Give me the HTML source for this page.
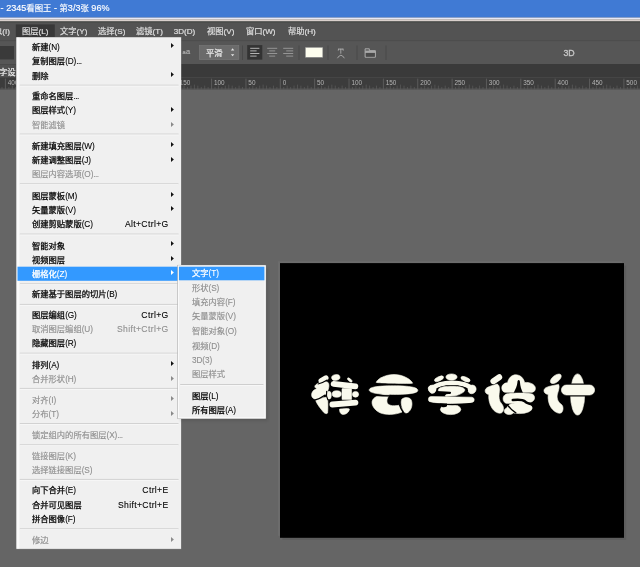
<!DOCTYPE html>
<html lang="zh-CN">
<head>
<meta charset="utf-8">
<title>2345看图王 - 第3/3张</title>
<style>
html,body{margin:0;padding:0}
body{width:640px;height:567px;overflow:hidden;position:relative;background:#656565;font-family:"Liberation Sans","Noto Sans CJK SC",sans-serif;-webkit-font-smoothing:antialiased}
#defs{position:absolute;width:0;height:0;overflow:hidden}
#bg{position:absolute;left:0;top:0;display:block}
.t{position:absolute;white-space:nowrap;line-height:12px;height:12px}
#chrome,.items{position:absolute;left:0;top:0;width:100%;height:100%;filter:blur(.28px)}
.t span{font-size:1.012em;letter-spacing:.12px;-webkit-text-stroke:.1px currentColor}
.ttl span{font-size:1.05em;letter-spacing:.02px}
.rl span{font-size:1em;letter-spacing:0}
.aa span{font-size:1em;letter-spacing:.3px}
.sm{font-style:normal;font-size:.78em}
.b3d span{font-size:1em;letter-spacing:0;-webkit-text-stroke:.3px currentColor !important}
.mi .t span{font-size:.97em;letter-spacing:-.1px}
.mi .sc span{font-size:1.012em;letter-spacing:.36px}
.menu{position:absolute}
.panel{position:absolute;left:0;top:0;display:block}
.mi{position:absolute}
.arr{position:absolute;display:block}
.el{font-style:normal;letter-spacing:-.5px}
.mb span{font-size:.95em;letter-spacing:0}
#chrome span{-webkit-text-stroke:.16px currentColor}
#chrome .rl span{-webkit-text-stroke:0}
.t span.c,.mi .t span.c{font-family:"Liberation Sans","Noto Sans CJK SC",sans-serif;font-size:.976em;letter-spacing:0;-webkit-text-stroke:.25px currentColor}
.dis .t span.c{-webkit-text-stroke:.15px currentColor}
</style>
</head>
<body>
<svg id="defs" aria-hidden="true"><defs><filter id="shb" x="-10%" y="-10%" width="120%" height="120%"><feGaussianBlur stdDeviation="1.6"/></filter></defs></svg>
<svg id="bg" width="640" height="567" viewBox="0 0 640 567"><rect x="0.00" y="0.00" width="640.00" height="17.60" fill="#407ad4"/><rect x="0.00" y="17.60" width="640.00" height="1.70" fill="#e6e8f6"/><rect x="0.00" y="19.30" width="640.00" height="2.20" fill="#d9d0cc"/><rect x="0.00" y="21.50" width="640.00" height="20.00" fill="#535353"/><rect x="0.00" y="21.50" width="640.00" height="1.30" fill="#4a4c4a"/><rect x="0.00" y="40.50" width="640.00" height="0.90" fill="#484848"/><rect x="0.00" y="41.40" width="640.00" height="22.60" fill="#565656"/><rect x="0.00" y="64.00" width="640.00" height="13.50" fill="#3a3a3a"/><rect x="0.00" y="64.30" width="16.50" height="13.40" fill="#505050"/><rect x="0.00" y="77.50" width="640.00" height="12.10" fill="#3c3c3c"/><rect x="15.80" y="24.40" width="39.00" height="13.20" fill="#383838"/><rect x="0.00" y="46.00" width="14.00" height="13.40" fill="#3a3a3a"/><rect x="199.40" y="45.50" width="39.40" height="14.10" fill="#6b6b6b" stroke="#7a7a7a" stroke-width="0.6"/><rect x="242.00" y="45.50" width="0.80" height="14.50" fill="#474747"/><rect x="298.60" y="45.50" width="0.80" height="14.50" fill="#474747"/><rect x="327.60" y="45.50" width="0.80" height="14.50" fill="#474747"/><rect x="356.60" y="45.50" width="0.80" height="14.50" fill="#474747"/><rect x="385.60" y="45.50" width="0.80" height="14.50" fill="#474747"/><rect x="247.20" y="45.10" width="15.10" height="14.50" fill="#333333"/><line x1="250.20" y1="48.30" x2="259.40" y2="48.30" stroke="#c2c2c2" stroke-width="0.90"/><line x1="267.20" y1="48.30" x2="277.20" y2="48.30" stroke="#9c9c9c" stroke-width="0.90"/><line x1="283.20" y1="48.30" x2="293.20" y2="48.30" stroke="#9c9c9c" stroke-width="0.90"/><line x1="250.20" y1="50.90" x2="256.60" y2="50.90" stroke="#c2c2c2" stroke-width="0.90"/><line x1="269.20" y1="50.90" x2="275.20" y2="50.90" stroke="#9c9c9c" stroke-width="0.90"/><line x1="286.20" y1="50.90" x2="293.20" y2="50.90" stroke="#9c9c9c" stroke-width="0.90"/><line x1="250.20" y1="53.50" x2="259.40" y2="53.50" stroke="#c2c2c2" stroke-width="0.90"/><line x1="267.20" y1="53.50" x2="277.20" y2="53.50" stroke="#9c9c9c" stroke-width="0.90"/><line x1="283.20" y1="53.50" x2="293.20" y2="53.50" stroke="#9c9c9c" stroke-width="0.90"/><line x1="250.20" y1="56.10" x2="256.60" y2="56.10" stroke="#c2c2c2" stroke-width="0.90"/><line x1="269.20" y1="56.10" x2="275.20" y2="56.10" stroke="#9c9c9c" stroke-width="0.90"/><line x1="286.20" y1="56.10" x2="293.20" y2="56.10" stroke="#9c9c9c" stroke-width="0.90"/><rect x="305.40" y="47.40" width="17.40" height="9.90" fill="#fdfdee" stroke="#8a8a8a" stroke-width="0.5"/><g fill="none" stroke="#bcbcbc" stroke-width="0.75" stroke-linecap="round"><path d="M338.6 49.1h4.4M340.8 49.1v4.2"/><path d="M338.3 50.3l0.2 -1.2M343.2 50.3l-0.2 -1.2" stroke-width="0.7"/><path d="M337.6 57.9q3.3 -5.6 6.6 0"/></g><g fill="none" stroke="#b4b4b4" stroke-width="0.9"><path d="M365.1 57.2v-8.4h4.2v1.9h6.1v6.5z"/><path d="M365.1 52.4h10.3" stroke-width="0.8"/></g><rect x="365.1" y="50.6" width="10.3" height="1.8" fill="#a8a8a8"/><rect x="366" y="53" width="8.6" height="3.6" fill="#4a4a4a"/><path d="M230.9 50.4l1.7 -2.1l1.7 2.1zM230.9 54.2l1.7 2.1l1.7 -2.1z" fill="#e4e4e4"/><line x1="-28.94" y1="78.60" x2="-28.94" y2="89.60" stroke="#666666" stroke-width="0.75"/><line x1="-25.50" y1="87.00" x2="-25.50" y2="89.60" stroke="#5d5d5d" stroke-width="0.70"/><line x1="-22.07" y1="85.60" x2="-22.07" y2="89.60" stroke="#5d5d5d" stroke-width="0.70"/><line x1="-18.63" y1="87.00" x2="-18.63" y2="89.60" stroke="#5d5d5d" stroke-width="0.70"/><line x1="-15.20" y1="85.60" x2="-15.20" y2="89.60" stroke="#5d5d5d" stroke-width="0.70"/><line x1="-11.76" y1="84.60" x2="-11.76" y2="89.60" stroke="#5d5d5d" stroke-width="0.70"/><line x1="-8.32" y1="85.60" x2="-8.32" y2="89.60" stroke="#5d5d5d" stroke-width="0.70"/><line x1="-4.89" y1="87.00" x2="-4.89" y2="89.60" stroke="#5d5d5d" stroke-width="0.70"/><line x1="-1.45" y1="85.60" x2="-1.45" y2="89.60" stroke="#5d5d5d" stroke-width="0.70"/><line x1="1.98" y1="87.00" x2="1.98" y2="89.60" stroke="#5d5d5d" stroke-width="0.70"/><line x1="5.42" y1="78.60" x2="5.42" y2="89.60" stroke="#666666" stroke-width="0.75"/><line x1="8.86" y1="87.00" x2="8.86" y2="89.60" stroke="#5d5d5d" stroke-width="0.70"/><line x1="12.29" y1="85.60" x2="12.29" y2="89.60" stroke="#5d5d5d" stroke-width="0.70"/><line x1="15.73" y1="87.00" x2="15.73" y2="89.60" stroke="#5d5d5d" stroke-width="0.70"/><line x1="19.16" y1="85.60" x2="19.16" y2="89.60" stroke="#5d5d5d" stroke-width="0.70"/><line x1="22.60" y1="84.60" x2="22.60" y2="89.60" stroke="#5d5d5d" stroke-width="0.70"/><line x1="26.04" y1="85.60" x2="26.04" y2="89.60" stroke="#5d5d5d" stroke-width="0.70"/><line x1="29.47" y1="87.00" x2="29.47" y2="89.60" stroke="#5d5d5d" stroke-width="0.70"/><line x1="32.91" y1="85.60" x2="32.91" y2="89.60" stroke="#5d5d5d" stroke-width="0.70"/><line x1="36.34" y1="87.00" x2="36.34" y2="89.60" stroke="#5d5d5d" stroke-width="0.70"/><line x1="39.78" y1="78.60" x2="39.78" y2="89.60" stroke="#666666" stroke-width="0.75"/><line x1="43.22" y1="87.00" x2="43.22" y2="89.60" stroke="#5d5d5d" stroke-width="0.70"/><line x1="46.65" y1="85.60" x2="46.65" y2="89.60" stroke="#5d5d5d" stroke-width="0.70"/><line x1="50.09" y1="87.00" x2="50.09" y2="89.60" stroke="#5d5d5d" stroke-width="0.70"/><line x1="53.52" y1="85.60" x2="53.52" y2="89.60" stroke="#5d5d5d" stroke-width="0.70"/><line x1="56.96" y1="84.60" x2="56.96" y2="89.60" stroke="#5d5d5d" stroke-width="0.70"/><line x1="60.40" y1="85.60" x2="60.40" y2="89.60" stroke="#5d5d5d" stroke-width="0.70"/><line x1="63.83" y1="87.00" x2="63.83" y2="89.60" stroke="#5d5d5d" stroke-width="0.70"/><line x1="67.27" y1="85.60" x2="67.27" y2="89.60" stroke="#5d5d5d" stroke-width="0.70"/><line x1="70.70" y1="87.00" x2="70.70" y2="89.60" stroke="#5d5d5d" stroke-width="0.70"/><line x1="74.14" y1="78.60" x2="74.14" y2="89.60" stroke="#666666" stroke-width="0.75"/><line x1="77.58" y1="87.00" x2="77.58" y2="89.60" stroke="#5d5d5d" stroke-width="0.70"/><line x1="81.01" y1="85.60" x2="81.01" y2="89.60" stroke="#5d5d5d" stroke-width="0.70"/><line x1="84.45" y1="87.00" x2="84.45" y2="89.60" stroke="#5d5d5d" stroke-width="0.70"/><line x1="87.88" y1="85.60" x2="87.88" y2="89.60" stroke="#5d5d5d" stroke-width="0.70"/><line x1="91.32" y1="84.60" x2="91.32" y2="89.60" stroke="#5d5d5d" stroke-width="0.70"/><line x1="94.76" y1="85.60" x2="94.76" y2="89.60" stroke="#5d5d5d" stroke-width="0.70"/><line x1="98.19" y1="87.00" x2="98.19" y2="89.60" stroke="#5d5d5d" stroke-width="0.70"/><line x1="101.63" y1="85.60" x2="101.63" y2="89.60" stroke="#5d5d5d" stroke-width="0.70"/><line x1="105.06" y1="87.00" x2="105.06" y2="89.60" stroke="#5d5d5d" stroke-width="0.70"/><line x1="108.50" y1="78.60" x2="108.50" y2="89.60" stroke="#666666" stroke-width="0.75"/><line x1="111.94" y1="87.00" x2="111.94" y2="89.60" stroke="#5d5d5d" stroke-width="0.70"/><line x1="115.37" y1="85.60" x2="115.37" y2="89.60" stroke="#5d5d5d" stroke-width="0.70"/><line x1="118.81" y1="87.00" x2="118.81" y2="89.60" stroke="#5d5d5d" stroke-width="0.70"/><line x1="122.24" y1="85.60" x2="122.24" y2="89.60" stroke="#5d5d5d" stroke-width="0.70"/><line x1="125.68" y1="84.60" x2="125.68" y2="89.60" stroke="#5d5d5d" stroke-width="0.70"/><line x1="129.12" y1="85.60" x2="129.12" y2="89.60" stroke="#5d5d5d" stroke-width="0.70"/><line x1="132.55" y1="87.00" x2="132.55" y2="89.60" stroke="#5d5d5d" stroke-width="0.70"/><line x1="135.99" y1="85.60" x2="135.99" y2="89.60" stroke="#5d5d5d" stroke-width="0.70"/><line x1="139.42" y1="87.00" x2="139.42" y2="89.60" stroke="#5d5d5d" stroke-width="0.70"/><line x1="142.86" y1="78.60" x2="142.86" y2="89.60" stroke="#666666" stroke-width="0.75"/><line x1="146.30" y1="87.00" x2="146.30" y2="89.60" stroke="#5d5d5d" stroke-width="0.70"/><line x1="149.73" y1="85.60" x2="149.73" y2="89.60" stroke="#5d5d5d" stroke-width="0.70"/><line x1="153.17" y1="87.00" x2="153.17" y2="89.60" stroke="#5d5d5d" stroke-width="0.70"/><line x1="156.60" y1="85.60" x2="156.60" y2="89.60" stroke="#5d5d5d" stroke-width="0.70"/><line x1="160.04" y1="84.60" x2="160.04" y2="89.60" stroke="#5d5d5d" stroke-width="0.70"/><line x1="163.48" y1="85.60" x2="163.48" y2="89.60" stroke="#5d5d5d" stroke-width="0.70"/><line x1="166.91" y1="87.00" x2="166.91" y2="89.60" stroke="#5d5d5d" stroke-width="0.70"/><line x1="170.35" y1="85.60" x2="170.35" y2="89.60" stroke="#5d5d5d" stroke-width="0.70"/><line x1="173.78" y1="87.00" x2="173.78" y2="89.60" stroke="#5d5d5d" stroke-width="0.70"/><line x1="177.22" y1="78.60" x2="177.22" y2="89.60" stroke="#666666" stroke-width="0.75"/><line x1="180.66" y1="87.00" x2="180.66" y2="89.60" stroke="#5d5d5d" stroke-width="0.70"/><line x1="184.09" y1="85.60" x2="184.09" y2="89.60" stroke="#5d5d5d" stroke-width="0.70"/><line x1="187.53" y1="87.00" x2="187.53" y2="89.60" stroke="#5d5d5d" stroke-width="0.70"/><line x1="190.96" y1="85.60" x2="190.96" y2="89.60" stroke="#5d5d5d" stroke-width="0.70"/><line x1="194.40" y1="84.60" x2="194.40" y2="89.60" stroke="#5d5d5d" stroke-width="0.70"/><line x1="197.84" y1="85.60" x2="197.84" y2="89.60" stroke="#5d5d5d" stroke-width="0.70"/><line x1="201.27" y1="87.00" x2="201.27" y2="89.60" stroke="#5d5d5d" stroke-width="0.70"/><line x1="204.71" y1="85.60" x2="204.71" y2="89.60" stroke="#5d5d5d" stroke-width="0.70"/><line x1="208.14" y1="87.00" x2="208.14" y2="89.60" stroke="#5d5d5d" stroke-width="0.70"/><line x1="211.58" y1="78.60" x2="211.58" y2="89.60" stroke="#666666" stroke-width="0.75"/><line x1="215.02" y1="87.00" x2="215.02" y2="89.60" stroke="#5d5d5d" stroke-width="0.70"/><line x1="218.45" y1="85.60" x2="218.45" y2="89.60" stroke="#5d5d5d" stroke-width="0.70"/><line x1="221.89" y1="87.00" x2="221.89" y2="89.60" stroke="#5d5d5d" stroke-width="0.70"/><line x1="225.32" y1="85.60" x2="225.32" y2="89.60" stroke="#5d5d5d" stroke-width="0.70"/><line x1="228.76" y1="84.60" x2="228.76" y2="89.60" stroke="#5d5d5d" stroke-width="0.70"/><line x1="232.20" y1="85.60" x2="232.20" y2="89.60" stroke="#5d5d5d" stroke-width="0.70"/><line x1="235.63" y1="87.00" x2="235.63" y2="89.60" stroke="#5d5d5d" stroke-width="0.70"/><line x1="239.07" y1="85.60" x2="239.07" y2="89.60" stroke="#5d5d5d" stroke-width="0.70"/><line x1="242.50" y1="87.00" x2="242.50" y2="89.60" stroke="#5d5d5d" stroke-width="0.70"/><line x1="245.94" y1="78.60" x2="245.94" y2="89.60" stroke="#666666" stroke-width="0.75"/><line x1="249.38" y1="87.00" x2="249.38" y2="89.60" stroke="#5d5d5d" stroke-width="0.70"/><line x1="252.81" y1="85.60" x2="252.81" y2="89.60" stroke="#5d5d5d" stroke-width="0.70"/><line x1="256.25" y1="87.00" x2="256.25" y2="89.60" stroke="#5d5d5d" stroke-width="0.70"/><line x1="259.68" y1="85.60" x2="259.68" y2="89.60" stroke="#5d5d5d" stroke-width="0.70"/><line x1="263.12" y1="84.60" x2="263.12" y2="89.60" stroke="#5d5d5d" stroke-width="0.70"/><line x1="266.56" y1="85.60" x2="266.56" y2="89.60" stroke="#5d5d5d" stroke-width="0.70"/><line x1="269.99" y1="87.00" x2="269.99" y2="89.60" stroke="#5d5d5d" stroke-width="0.70"/><line x1="273.43" y1="85.60" x2="273.43" y2="89.60" stroke="#5d5d5d" stroke-width="0.70"/><line x1="276.86" y1="87.00" x2="276.86" y2="89.60" stroke="#5d5d5d" stroke-width="0.70"/><line x1="280.30" y1="78.60" x2="280.30" y2="89.60" stroke="#666666" stroke-width="0.75"/><line x1="283.74" y1="87.00" x2="283.74" y2="89.60" stroke="#5d5d5d" stroke-width="0.70"/><line x1="287.17" y1="85.60" x2="287.17" y2="89.60" stroke="#5d5d5d" stroke-width="0.70"/><line x1="290.61" y1="87.00" x2="290.61" y2="89.60" stroke="#5d5d5d" stroke-width="0.70"/><line x1="294.04" y1="85.60" x2="294.04" y2="89.60" stroke="#5d5d5d" stroke-width="0.70"/><line x1="297.48" y1="84.60" x2="297.48" y2="89.60" stroke="#5d5d5d" stroke-width="0.70"/><line x1="300.92" y1="85.60" x2="300.92" y2="89.60" stroke="#5d5d5d" stroke-width="0.70"/><line x1="304.35" y1="87.00" x2="304.35" y2="89.60" stroke="#5d5d5d" stroke-width="0.70"/><line x1="307.79" y1="85.60" x2="307.79" y2="89.60" stroke="#5d5d5d" stroke-width="0.70"/><line x1="311.22" y1="87.00" x2="311.22" y2="89.60" stroke="#5d5d5d" stroke-width="0.70"/><line x1="314.66" y1="78.60" x2="314.66" y2="89.60" stroke="#666666" stroke-width="0.75"/><line x1="318.10" y1="87.00" x2="318.10" y2="89.60" stroke="#5d5d5d" stroke-width="0.70"/><line x1="321.53" y1="85.60" x2="321.53" y2="89.60" stroke="#5d5d5d" stroke-width="0.70"/><line x1="324.97" y1="87.00" x2="324.97" y2="89.60" stroke="#5d5d5d" stroke-width="0.70"/><line x1="328.40" y1="85.60" x2="328.40" y2="89.60" stroke="#5d5d5d" stroke-width="0.70"/><line x1="331.84" y1="84.60" x2="331.84" y2="89.60" stroke="#5d5d5d" stroke-width="0.70"/><line x1="335.28" y1="85.60" x2="335.28" y2="89.60" stroke="#5d5d5d" stroke-width="0.70"/><line x1="338.71" y1="87.00" x2="338.71" y2="89.60" stroke="#5d5d5d" stroke-width="0.70"/><line x1="342.15" y1="85.60" x2="342.15" y2="89.60" stroke="#5d5d5d" stroke-width="0.70"/><line x1="345.58" y1="87.00" x2="345.58" y2="89.60" stroke="#5d5d5d" stroke-width="0.70"/><line x1="349.02" y1="78.60" x2="349.02" y2="89.60" stroke="#666666" stroke-width="0.75"/><line x1="352.46" y1="87.00" x2="352.46" y2="89.60" stroke="#5d5d5d" stroke-width="0.70"/><line x1="355.89" y1="85.60" x2="355.89" y2="89.60" stroke="#5d5d5d" stroke-width="0.70"/><line x1="359.33" y1="87.00" x2="359.33" y2="89.60" stroke="#5d5d5d" stroke-width="0.70"/><line x1="362.76" y1="85.60" x2="362.76" y2="89.60" stroke="#5d5d5d" stroke-width="0.70"/><line x1="366.20" y1="84.60" x2="366.20" y2="89.60" stroke="#5d5d5d" stroke-width="0.70"/><line x1="369.64" y1="85.60" x2="369.64" y2="89.60" stroke="#5d5d5d" stroke-width="0.70"/><line x1="373.07" y1="87.00" x2="373.07" y2="89.60" stroke="#5d5d5d" stroke-width="0.70"/><line x1="376.51" y1="85.60" x2="376.51" y2="89.60" stroke="#5d5d5d" stroke-width="0.70"/><line x1="379.94" y1="87.00" x2="379.94" y2="89.60" stroke="#5d5d5d" stroke-width="0.70"/><line x1="383.38" y1="78.60" x2="383.38" y2="89.60" stroke="#666666" stroke-width="0.75"/><line x1="386.82" y1="87.00" x2="386.82" y2="89.60" stroke="#5d5d5d" stroke-width="0.70"/><line x1="390.25" y1="85.60" x2="390.25" y2="89.60" stroke="#5d5d5d" stroke-width="0.70"/><line x1="393.69" y1="87.00" x2="393.69" y2="89.60" stroke="#5d5d5d" stroke-width="0.70"/><line x1="397.12" y1="85.60" x2="397.12" y2="89.60" stroke="#5d5d5d" stroke-width="0.70"/><line x1="400.56" y1="84.60" x2="400.56" y2="89.60" stroke="#5d5d5d" stroke-width="0.70"/><line x1="404.00" y1="85.60" x2="404.00" y2="89.60" stroke="#5d5d5d" stroke-width="0.70"/><line x1="407.43" y1="87.00" x2="407.43" y2="89.60" stroke="#5d5d5d" stroke-width="0.70"/><line x1="410.87" y1="85.60" x2="410.87" y2="89.60" stroke="#5d5d5d" stroke-width="0.70"/><line x1="414.30" y1="87.00" x2="414.30" y2="89.60" stroke="#5d5d5d" stroke-width="0.70"/><line x1="417.74" y1="78.60" x2="417.74" y2="89.60" stroke="#666666" stroke-width="0.75"/><line x1="421.18" y1="87.00" x2="421.18" y2="89.60" stroke="#5d5d5d" stroke-width="0.70"/><line x1="424.61" y1="85.60" x2="424.61" y2="89.60" stroke="#5d5d5d" stroke-width="0.70"/><line x1="428.05" y1="87.00" x2="428.05" y2="89.60" stroke="#5d5d5d" stroke-width="0.70"/><line x1="431.48" y1="85.60" x2="431.48" y2="89.60" stroke="#5d5d5d" stroke-width="0.70"/><line x1="434.92" y1="84.60" x2="434.92" y2="89.60" stroke="#5d5d5d" stroke-width="0.70"/><line x1="438.36" y1="85.60" x2="438.36" y2="89.60" stroke="#5d5d5d" stroke-width="0.70"/><line x1="441.79" y1="87.00" x2="441.79" y2="89.60" stroke="#5d5d5d" stroke-width="0.70"/><line x1="445.23" y1="85.60" x2="445.23" y2="89.60" stroke="#5d5d5d" stroke-width="0.70"/><line x1="448.66" y1="87.00" x2="448.66" y2="89.60" stroke="#5d5d5d" stroke-width="0.70"/><line x1="452.10" y1="78.60" x2="452.10" y2="89.60" stroke="#666666" stroke-width="0.75"/><line x1="455.54" y1="87.00" x2="455.54" y2="89.60" stroke="#5d5d5d" stroke-width="0.70"/><line x1="458.97" y1="85.60" x2="458.97" y2="89.60" stroke="#5d5d5d" stroke-width="0.70"/><line x1="462.41" y1="87.00" x2="462.41" y2="89.60" stroke="#5d5d5d" stroke-width="0.70"/><line x1="465.84" y1="85.60" x2="465.84" y2="89.60" stroke="#5d5d5d" stroke-width="0.70"/><line x1="469.28" y1="84.60" x2="469.28" y2="89.60" stroke="#5d5d5d" stroke-width="0.70"/><line x1="472.72" y1="85.60" x2="472.72" y2="89.60" stroke="#5d5d5d" stroke-width="0.70"/><line x1="476.15" y1="87.00" x2="476.15" y2="89.60" stroke="#5d5d5d" stroke-width="0.70"/><line x1="479.59" y1="85.60" x2="479.59" y2="89.60" stroke="#5d5d5d" stroke-width="0.70"/><line x1="483.02" y1="87.00" x2="483.02" y2="89.60" stroke="#5d5d5d" stroke-width="0.70"/><line x1="486.46" y1="78.60" x2="486.46" y2="89.60" stroke="#666666" stroke-width="0.75"/><line x1="489.90" y1="87.00" x2="489.90" y2="89.60" stroke="#5d5d5d" stroke-width="0.70"/><line x1="493.33" y1="85.60" x2="493.33" y2="89.60" stroke="#5d5d5d" stroke-width="0.70"/><line x1="496.77" y1="87.00" x2="496.77" y2="89.60" stroke="#5d5d5d" stroke-width="0.70"/><line x1="500.20" y1="85.60" x2="500.20" y2="89.60" stroke="#5d5d5d" stroke-width="0.70"/><line x1="503.64" y1="84.60" x2="503.64" y2="89.60" stroke="#5d5d5d" stroke-width="0.70"/><line x1="507.08" y1="85.60" x2="507.08" y2="89.60" stroke="#5d5d5d" stroke-width="0.70"/><line x1="510.51" y1="87.00" x2="510.51" y2="89.60" stroke="#5d5d5d" stroke-width="0.70"/><line x1="513.95" y1="85.60" x2="513.95" y2="89.60" stroke="#5d5d5d" stroke-width="0.70"/><line x1="517.38" y1="87.00" x2="517.38" y2="89.60" stroke="#5d5d5d" stroke-width="0.70"/><line x1="520.82" y1="78.60" x2="520.82" y2="89.60" stroke="#666666" stroke-width="0.75"/><line x1="524.26" y1="87.00" x2="524.26" y2="89.60" stroke="#5d5d5d" stroke-width="0.70"/><line x1="527.69" y1="85.60" x2="527.69" y2="89.60" stroke="#5d5d5d" stroke-width="0.70"/><line x1="531.13" y1="87.00" x2="531.13" y2="89.60" stroke="#5d5d5d" stroke-width="0.70"/><line x1="534.56" y1="85.60" x2="534.56" y2="89.60" stroke="#5d5d5d" stroke-width="0.70"/><line x1="538.00" y1="84.60" x2="538.00" y2="89.60" stroke="#5d5d5d" stroke-width="0.70"/><line x1="541.44" y1="85.60" x2="541.44" y2="89.60" stroke="#5d5d5d" stroke-width="0.70"/><line x1="544.87" y1="87.00" x2="544.87" y2="89.60" stroke="#5d5d5d" stroke-width="0.70"/><line x1="548.31" y1="85.60" x2="548.31" y2="89.60" stroke="#5d5d5d" stroke-width="0.70"/><line x1="551.74" y1="87.00" x2="551.74" y2="89.60" stroke="#5d5d5d" stroke-width="0.70"/><line x1="555.18" y1="78.60" x2="555.18" y2="89.60" stroke="#666666" stroke-width="0.75"/><line x1="558.62" y1="87.00" x2="558.62" y2="89.60" stroke="#5d5d5d" stroke-width="0.70"/><line x1="562.05" y1="85.60" x2="562.05" y2="89.60" stroke="#5d5d5d" stroke-width="0.70"/><line x1="565.49" y1="87.00" x2="565.49" y2="89.60" stroke="#5d5d5d" stroke-width="0.70"/><line x1="568.92" y1="85.60" x2="568.92" y2="89.60" stroke="#5d5d5d" stroke-width="0.70"/><line x1="572.36" y1="84.60" x2="572.36" y2="89.60" stroke="#5d5d5d" stroke-width="0.70"/><line x1="575.80" y1="85.60" x2="575.80" y2="89.60" stroke="#5d5d5d" stroke-width="0.70"/><line x1="579.23" y1="87.00" x2="579.23" y2="89.60" stroke="#5d5d5d" stroke-width="0.70"/><line x1="582.67" y1="85.60" x2="582.67" y2="89.60" stroke="#5d5d5d" stroke-width="0.70"/><line x1="586.10" y1="87.00" x2="586.10" y2="89.60" stroke="#5d5d5d" stroke-width="0.70"/><line x1="589.54" y1="78.60" x2="589.54" y2="89.60" stroke="#666666" stroke-width="0.75"/><line x1="592.98" y1="87.00" x2="592.98" y2="89.60" stroke="#5d5d5d" stroke-width="0.70"/><line x1="596.41" y1="85.60" x2="596.41" y2="89.60" stroke="#5d5d5d" stroke-width="0.70"/><line x1="599.85" y1="87.00" x2="599.85" y2="89.60" stroke="#5d5d5d" stroke-width="0.70"/><line x1="603.28" y1="85.60" x2="603.28" y2="89.60" stroke="#5d5d5d" stroke-width="0.70"/><line x1="606.72" y1="84.60" x2="606.72" y2="89.60" stroke="#5d5d5d" stroke-width="0.70"/><line x1="610.16" y1="85.60" x2="610.16" y2="89.60" stroke="#5d5d5d" stroke-width="0.70"/><line x1="613.59" y1="87.00" x2="613.59" y2="89.60" stroke="#5d5d5d" stroke-width="0.70"/><line x1="617.03" y1="85.60" x2="617.03" y2="89.60" stroke="#5d5d5d" stroke-width="0.70"/><line x1="620.46" y1="87.00" x2="620.46" y2="89.60" stroke="#5d5d5d" stroke-width="0.70"/><line x1="623.90" y1="78.60" x2="623.90" y2="89.60" stroke="#666666" stroke-width="0.75"/><line x1="627.34" y1="87.00" x2="627.34" y2="89.60" stroke="#5d5d5d" stroke-width="0.70"/><line x1="630.77" y1="85.60" x2="630.77" y2="89.60" stroke="#5d5d5d" stroke-width="0.70"/><line x1="634.21" y1="87.00" x2="634.21" y2="89.60" stroke="#5d5d5d" stroke-width="0.70"/><line x1="637.64" y1="85.60" x2="637.64" y2="89.60" stroke="#5d5d5d" stroke-width="0.70"/><line x1="641.08" y1="84.60" x2="641.08" y2="89.60" stroke="#5d5d5d" stroke-width="0.70"/><line x1="644.52" y1="85.60" x2="644.52" y2="89.60" stroke="#5d5d5d" stroke-width="0.70"/><line x1="647.95" y1="87.00" x2="647.95" y2="89.60" stroke="#5d5d5d" stroke-width="0.70"/><line x1="651.39" y1="85.60" x2="651.39" y2="89.60" stroke="#5d5d5d" stroke-width="0.70"/><line x1="654.82" y1="87.00" x2="654.82" y2="89.60" stroke="#5d5d5d" stroke-width="0.70"/><rect x="0.00" y="88.60" width="640.00" height="1.10" fill="#5c5c5c"/><rect x="278.00" y="261.20" width="344.00" height="274.70" fill="#6c6c6c"/><rect x="282.50" y="265.60" width="343.60" height="274.40" fill="#5b5b5b" opacity="0.8"/><rect x="280.00" y="263.10" width="344.00" height="274.70" fill="#000"/><g transform="translate(308 370) scale(.1)"><path d="M132 108L178 80" fill="none" stroke="#fafaed" stroke-width="54" stroke-linecap="round" stroke-linejoin="round"/><path d="M200 124C220 150 206 200 182 236C160 270 110 306 70 293C30 280 26 236 54 206C62 198 76 192 90 188C70 180 60 164 76 150C102 126 166 104 200 124Z" fill="#fafaed" stroke="#fafaed" stroke-width="6" stroke-linejoin="round"/><path d="M76 304C104 292 160 270 194 272C200 300 200 400 196 430C188 442 168 436 154 420C124 384 92 344 76 304Z" fill="#fafaed" stroke="#fafaed" stroke-width="6" stroke-linejoin="round"/><path d="M66 302C100 292 140 272 168 252" fill="none" stroke="#000" stroke-width="14" stroke-linecap="round" stroke-linejoin="round"/><path d="M100 140C130 134 160 120 192 100" fill="none" stroke="#000" stroke-width="11" stroke-linecap="round" stroke-linejoin="round"/><ellipse cx="211" cy="252" rx="22" ry="39" fill="#fafaed" stroke="#fafaed" stroke-width="6"/><path d="M186 214C182 244 186 276 198 296" fill="none" stroke="#000" stroke-width="11" stroke-linecap="round" stroke-linejoin="round"/><ellipse cx="278" cy="75" rx="42" ry="29" fill="#fafaed" stroke="#fafaed" stroke-width="6" transform="rotate(-10 278 75)"/><ellipse cx="418" cy="100" rx="29" ry="12" fill="#fafaed" stroke="#fafaed" stroke-width="6" transform="rotate(40 418 100)"/><path d="M256 139L474 164" fill="none" stroke="#fafaed" stroke-width="57" stroke-linecap="round" stroke-linejoin="round"/><ellipse cx="287" cy="240" rx="46" ry="33" fill="#fafaed" stroke="#fafaed" stroke-width="6"/><ellipse cx="475" cy="243" rx="31" ry="29" fill="#fafaed" stroke="#fafaed" stroke-width="6"/><path d="M344 186h88q4 0 4 4v102q0 4 -4 4h-88q-4 0 -4 -4v-102q0 -4 4 -4Z" fill="#fafaed" stroke="#fafaed" stroke-width="6" stroke-linejoin="round"/><path d="M244 345L474 326" fill="none" stroke="#fafaed" stroke-width="59" stroke-linecap="round" stroke-linejoin="round"/><path d="M316 388C344 380 398 380 414 390C412 420 380 448 346 444C322 440 312 412 316 388Z" fill="#fafaed" stroke="#fafaed" stroke-width="6" stroke-linejoin="round"/><path d="M300 383L430 372" fill="none" stroke="#000" stroke-width="11" stroke-linecap="round" stroke-linejoin="round"/></g><g transform="translate(365 370) scale(.1)"><path d="M112 124C118 94 200 45 290 45C380 45 462 96 476 132C466 138 122 130 112 124Z" fill="#fafaed" stroke="#fafaed" stroke-width="6" stroke-linejoin="round"/><path d="M236 246C180 240 100 256 76 300C56 340 90 400 150 428C210 452 300 450 372 420C384 410 372 384 346 352C300 360 244 362 226 334C212 310 222 272 246 250Z" fill="#fafaed" stroke="#fafaed" stroke-width="6" stroke-linejoin="round"/><path d="M368 292C396 268 446 270 462 300C480 340 466 400 430 424C410 436 392 428 384 408C372 376 352 330 368 292Z" fill="#fafaed" stroke="#fafaed" stroke-width="6" stroke-linejoin="round"/><path d="M346 350C354 380 372 408 386 430" fill="none" stroke="#000" stroke-width="14" stroke-linecap="round" stroke-linejoin="round"/><path d="M60 250C200 262 380 262 520 250" fill="none" stroke="#000" stroke-width="16" stroke-linecap="round" stroke-linejoin="round"/><path d="M42 200C42 172 120 158 284 158C450 158 528 174 528 204C528 230 450 244 284 244C120 244 42 228 42 200Z" fill="#fafaed" stroke="#fafaed" stroke-width="6" stroke-linejoin="round"/></g><g transform="translate(425 370) scale(.1)"><ellipse cx="140" cy="88" rx="49" ry="21" fill="#fafaed" stroke="#fafaed" stroke-width="6" transform="rotate(-25 140 88)"/><ellipse cx="265" cy="70" rx="56" ry="31" fill="#fafaed" stroke="#fafaed" stroke-width="6"/><ellipse cx="405" cy="92" rx="49" ry="21" fill="#fafaed" stroke="#fafaed" stroke-width="6" transform="rotate(22 405 92)"/><path d="M72 195C116 106 424 106 470 195" fill="none" stroke="#fafaed" stroke-width="46" stroke-linecap="round" stroke-linejoin="round"/><ellipse cx="72" cy="192" rx="38" ry="42" fill="#fafaed" stroke="#fafaed" stroke-width="6" transform="rotate(-30 72 192)"/><ellipse cx="470" cy="194" rx="40" ry="44" fill="#fafaed" stroke="#fafaed" stroke-width="6" transform="rotate(30 470 194)"/><path d="M118 204C160 142 380 142 424 204" fill="none" stroke="#000" stroke-width="14" stroke-linecap="round" stroke-linejoin="round"/><path d="M136 192C142 168 220 162 270 162C330 162 396 172 398 198C400 224 340 248 304 258L206 262C196 250 222 240 250 236L252 224L142 222C132 214 132 202 136 192Z" fill="#fafaed" stroke="#fafaed" stroke-width="6" stroke-linejoin="round"/><path d="M116 222L250 228" fill="none" stroke="#000" stroke-width="22" stroke-linecap="round" stroke-linejoin="round"/><path d="M62 266L470 272A27 27 0 0 1 474 324C400 340 130 340 60 320A27 27 0 0 1 62 266Z" fill="#fafaed" stroke="#fafaed" stroke-width="6" stroke-linejoin="round"/><ellipse cx="256" cy="394" rx="102" ry="52" fill="#fafaed" stroke="#fafaed" stroke-width="6"/><path d="M150 336h70v26q-20 14 -50 8Z" fill="#000"/><path d="M40 330C160 350 380 350 500 332" fill="none" stroke="#000" stroke-width="12" stroke-linecap="round" stroke-linejoin="round"/></g><g transform="translate(482 370) scale(.1)"><path d="M114 112L172 72" fill="none" stroke="#fafaed" stroke-width="60" stroke-linecap="round" stroke-linejoin="round"/><path d="M34 196C44 168 100 158 150 140C176 150 180 190 172 232C166 270 170 310 198 340C220 366 222 404 200 426C170 444 124 420 98 378C72 334 64 286 68 244C46 244 24 222 34 196Z" fill="#fafaed" stroke="#fafaed" stroke-width="6" stroke-linejoin="round"/><path d="M198 184C196 150 222 128 256 128C262 84 296 48 338 48C384 48 418 84 426 126C470 118 534 140 534 184C534 214 508 228 478 228L250 228C220 228 200 212 198 184Z" fill="#fafaed" stroke="#fafaed" stroke-width="6" stroke-linejoin="round"/><path d="M367 100C358 100 354 112 354 126C352 160 334 196 316 230L410 230C392 196 382 160 380 126C380 112 376 100 367 100Z" fill="#000"/><path d="M200 234L540 234" fill="none" stroke="#000" stroke-width="14" stroke-linecap="round" stroke-linejoin="round"/><path d="M250 238C320 228 450 228 500 240C530 250 534 290 510 310C490 330 440 334 400 330L250 334C200 330 196 250 250 238Z" fill="#fafaed" stroke="#fafaed" stroke-width="6" stroke-linejoin="round"/><ellipse cx="376" cy="380" rx="126" ry="56" fill="#fafaed" stroke="#fafaed" stroke-width="6"/><path d="M308 300C350 296 410 298 428 312C436 326 470 338 508 344" fill="none" stroke="#000" stroke-width="26" stroke-linecap="round" stroke-linejoin="round"/><ellipse cx="272" cy="410" rx="50" ry="36" fill="#fafaed" stroke="#fafaed" stroke-width="6"/><path d="M252 346C276 380 304 408 338 428" fill="none" stroke="#000" stroke-width="14" stroke-linecap="round" stroke-linejoin="round"/></g><g transform="translate(540 370) scale(.1)"><ellipse cx="158" cy="88" rx="64" ry="33" fill="#fafaed" stroke="#fafaed" stroke-width="6" transform="rotate(-38 158 88)"/><path d="M42 196C52 166 110 160 186 144C200 170 182 210 172 250C168 290 180 320 220 350C236 370 234 410 214 428C186 444 140 416 112 378C84 336 78 290 82 244C58 244 32 222 42 196Z" fill="#fafaed" stroke="#fafaed" stroke-width="6" stroke-linejoin="round"/><ellipse cx="376" cy="245" rx="71" ry="206" fill="#fafaed" stroke="#fafaed" stroke-width="6"/><path d="M214 142L548 142" fill="none" stroke="#000" stroke-width="15" stroke-linecap="round" stroke-linejoin="round"/><path d="M214 258L548 258" fill="none" stroke="#000" stroke-width="15" stroke-linecap="round" stroke-linejoin="round"/><path d="M264 150h232a50 50 0 0 1 0 100h-232a50 50 0 0 1 0 -100Z" fill="#fafaed" stroke="#fafaed" stroke-width="6" stroke-linejoin="round"/></g></svg>
<div id="chrome"><div class="t ttl" style="top:2px;font-size:8.60px;left:0.60px;color:#fff;"><span>- 2345</span><span class="c">看图王</span><span> - </span><span class="c">第</span><span>3/3</span><span class="c">张</span><span> 96%</span></div><div class="t mb" style="top:25px;font-size:8.50px;left:-6px;color:#e0e0e0;"><span class="c">象</span><span>(I)</span></div><div class="t mb" style="top:25px;font-size:8.50px;left:22px;color:#e0e0e0;"><span class="c">图层</span><span>(L)</span></div><div class="t mb" style="top:25px;font-size:8.50px;left:60px;color:#e0e0e0;"><span class="c">文字</span><span>(Y)</span></div><div class="t mb" style="top:25px;font-size:8.50px;left:98px;color:#e0e0e0;"><span class="c">选择</span><span>(S)</span></div><div class="t mb" style="top:25px;font-size:8.50px;left:136px;color:#e0e0e0;"><span class="c">滤镜</span><span>(T)</span></div><div class="t mb" style="top:25px;font-size:8.50px;left:173.80px;color:#e0e0e0;"><span>3D(D)</span></div><div class="t mb" style="top:25px;font-size:8.50px;left:207px;color:#e0e0e0;"><span class="c">视图</span><span>(V)</span></div><div class="t mb" style="top:25px;font-size:8.50px;left:246px;color:#e0e0e0;"><span class="c">窗口</span><span>(W)</span></div><div class="t mb" style="top:25px;font-size:8.50px;left:288px;color:#e0e0e0;"><span class="c">帮助</span><span>(H)</span></div><div class="t" style="top:47px;font-size:8.50px;left:206px;color:#f4f4f4;"><span class="c">平滑</span></div><div class="t aa" style="left:182.4px;top:46px;font-size:7.4px;color:#b6b6b6"><span><i class="sm">a</i>a</span></div><div class="t b3d" style="top:47px;font-size:8.80px;left:563.40px;color:#c8c8c8;"><span>3D</span></div><div class="t" style="top:66px;font-size:8.50px;left:-1px;color:#f2f2f2;"><span class="c">字设</span></div><div class="t rl" style="top:77px;font-size:6.40px;left:7.82px;color:#b4b4b4;"><span>400</span></div><div class="t rl" style="top:77px;font-size:6.40px;left:179.62px;color:#b4b4b4;"><span>150</span></div><div class="t rl" style="top:77px;font-size:6.40px;left:213.98px;color:#b4b4b4;"><span>100</span></div><div class="t rl" style="top:77px;font-size:6.40px;left:248.34px;color:#b4b4b4;"><span>50</span></div><div class="t rl" style="top:77px;font-size:6.40px;left:282.70px;color:#b4b4b4;"><span>0</span></div><div class="t rl" style="top:77px;font-size:6.40px;left:317.06px;color:#b4b4b4;"><span>50</span></div><div class="t rl" style="top:77px;font-size:6.40px;left:351.42px;color:#b4b4b4;"><span>100</span></div><div class="t rl" style="top:77px;font-size:6.40px;left:385.78px;color:#b4b4b4;"><span>150</span></div><div class="t rl" style="top:77px;font-size:6.40px;left:420.14px;color:#b4b4b4;"><span>200</span></div><div class="t rl" style="top:77px;font-size:6.40px;left:454.50px;color:#b4b4b4;"><span>250</span></div><div class="t rl" style="top:77px;font-size:6.40px;left:488.86px;color:#b4b4b4;"><span>300</span></div><div class="t rl" style="top:77px;font-size:6.40px;left:523.22px;color:#b4b4b4;"><span>350</span></div><div class="t rl" style="top:77px;font-size:6.40px;left:557.58px;color:#b4b4b4;"><span>400</span></div><div class="t rl" style="top:77px;font-size:6.40px;left:591.94px;color:#b4b4b4;"><span>450</span></div><div class="t rl" style="top:77px;font-size:6.40px;left:626.30px;color:#b4b4b4;"><span>500</span></div></div>
<div class="menu main" style="left:12px;top:33px;width:178px;height:525px"><svg class="panel" width="178" height="525" viewBox="0 0 178 525"><rect x="4.15" y="4.05" width="165.20" height="512.10" fill="#9a9a9a"/><rect x="4.50" y="4.40" width="164.50" height="511.40" fill="#f0f0f0"/><rect x="4.80" y="4.70" width="2.6" height="510.80" fill="#fafafa"/><rect x="7.80" y="51.75" width="158.70" height=".9" fill="#c8c8c8"/><rect x="7.80" y="52.65" width="158.70" height=".7" fill="#fbfbfb"/><rect x="7.80" y="100.65" width="158.70" height=".9" fill="#c8c8c8"/><rect x="7.80" y="101.55" width="158.70" height=".7" fill="#fbfbfb"/><rect x="7.80" y="150.45" width="158.70" height=".9" fill="#c8c8c8"/><rect x="7.80" y="151.35" width="158.70" height=".7" fill="#fbfbfb"/><rect x="7.80" y="200.65" width="158.70" height=".9" fill="#c8c8c8"/><rect x="7.80" y="201.55" width="158.70" height=".7" fill="#fbfbfb"/><rect x="5.50" y="233.70" width="162.70" height="14.10" fill="#3399ff"/><rect x="7.80" y="250.45" width="158.70" height=".9" fill="#c8c8c8"/><rect x="7.80" y="251.35" width="158.70" height=".7" fill="#fbfbfb"/><rect x="7.80" y="270.95" width="158.70" height=".9" fill="#c8c8c8"/><rect x="7.80" y="271.85" width="158.70" height=".7" fill="#fbfbfb"/><rect x="7.80" y="319.75" width="158.70" height=".9" fill="#c8c8c8"/><rect x="7.80" y="320.65" width="158.70" height=".7" fill="#fbfbfb"/><rect x="7.80" y="354.95" width="158.70" height=".9" fill="#c8c8c8"/><rect x="7.80" y="355.85" width="158.70" height=".7" fill="#fbfbfb"/><rect x="7.80" y="390.25" width="158.70" height=".9" fill="#c8c8c8"/><rect x="7.80" y="391.15" width="158.70" height=".7" fill="#fbfbfb"/><rect x="7.80" y="411.45" width="158.70" height=".9" fill="#c8c8c8"/><rect x="7.80" y="412.35" width="158.70" height=".7" fill="#fbfbfb"/><rect x="7.80" y="445.95" width="158.70" height=".9" fill="#c8c8c8"/><rect x="7.80" y="446.85" width="158.70" height=".7" fill="#fbfbfb"/><rect x="7.80" y="495.45" width="158.70" height=".9" fill="#c8c8c8"/><rect x="7.80" y="496.35" width="158.70" height=".7" fill="#fbfbfb"/></svg><div class="items"><div class="mi" style="left:6px;top:7px;width:162.20px;height:14.08px"><div class="t" style="left:14px;top:1px;font-size:8.50px;color:#000"><span class="c">新建</span><span>(N)</span></div><svg class="arr" style="left:153.30px;top:3.40px" width="3" height="5" viewBox="0 0 3 5"><path d="M0 0L2.9 2.5L0 5Z" fill="#111"/></svg></div><div class="mi" style="left:6px;top:21px;width:162.20px;height:14.42px"><div class="t" style="left:14px;top:1px;font-size:8.50px;color:#000"><span class="c">复制图层</span><span>(D)<i class="el">...</i></span></div></div><div class="mi" style="left:6px;top:35px;width:162.20px;height:14.77px"><div class="t" style="left:14px;top:2px;font-size:8.50px;color:#000"><span class="c">删除</span></div><svg class="arr" style="left:153.30px;top:4.10px" width="3" height="5" viewBox="0 0 3 5"><path d="M0 0L2.9 2.5L0 5Z" fill="#111"/></svg></div><div class="mi" style="left:6px;top:56px;width:162.20px;height:14.57px"><div class="t" style="left:14px;top:1px;font-size:8.50px;color:#000"><span class="c">重命名图层</span><span><i class="el">...</i></span></div></div><div class="mi" style="left:6px;top:71px;width:162.20px;height:13.92px"><div class="t" style="left:14px;top:0px;font-size:8.50px;color:#000"><span class="c">图层样式</span><span>(Y)</span></div><svg class="arr" style="left:153.30px;top:3.25px" width="3" height="5" viewBox="0 0 3 5"><path d="M0 0L2.9 2.5L0 5Z" fill="#111"/></svg></div><div class="mi dis" style="left:6px;top:85px;width:162.20px;height:14.27px"><div class="t" style="left:14px;top:1px;font-size:8.50px;color:#8e8e8e"><span class="c">智能滤镜</span></div><svg class="arr" style="left:153.30px;top:3.60px" width="3" height="5" viewBox="0 0 3 5"><path d="M0 0L2.9 2.5L0 5Z" fill="#8a8a8a"/></svg></div><div class="mi" style="left:6px;top:106px;width:162.20px;height:14.07px"><div class="t" style="left:14px;top:1px;font-size:8.50px;color:#000"><span class="c">新建填充图层</span><span>(W)</span></div><svg class="arr" style="left:153.30px;top:3.40px" width="3" height="5" viewBox="0 0 3 5"><path d="M0 0L2.9 2.5L0 5Z" fill="#111"/></svg></div><div class="mi" style="left:6px;top:120px;width:162.20px;height:14.42px"><div class="t" style="left:14px;top:1px;font-size:8.50px;color:#000"><span class="c">新建调整图层</span><span>(J)</span></div><svg class="arr" style="left:153.30px;top:3.75px" width="3" height="5" viewBox="0 0 3 5"><path d="M0 0L2.9 2.5L0 5Z" fill="#111"/></svg></div><div class="mi dis" style="left:6px;top:134px;width:162.20px;height:14.77px"><div class="t" style="left:14px;top:1px;font-size:8.50px;color:#8e8e8e"><span class="c">图层内容选项</span><span>(O)<i class="el">...</i></span></div></div><div class="mi" style="left:6px;top:155px;width:162.20px;height:14.57px"><div class="t" style="left:14px;top:2px;font-size:8.50px;color:#000"><span class="c">图层蒙板</span><span>(M)</span></div><svg class="arr" style="left:153.30px;top:3.90px" width="3" height="5" viewBox="0 0 3 5"><path d="M0 0L2.9 2.5L0 5Z" fill="#111"/></svg></div><div class="mi" style="left:6px;top:170px;width:162.20px;height:13.92px"><div class="t" style="left:14px;top:1px;font-size:8.50px;color:#000"><span class="c">矢量蒙版</span><span>(V)</span></div><svg class="arr" style="left:153.30px;top:3.25px" width="3" height="5" viewBox="0 0 3 5"><path d="M0 0L2.9 2.5L0 5Z" fill="#111"/></svg></div><div class="mi" style="left:6px;top:184px;width:162.20px;height:14.27px"><div class="t" style="left:14px;top:1px;font-size:8.50px;color:#000"><span class="c">创建剪贴蒙版</span><span>(C)</span></div><div class="t sc" style="right:11.60px;top:1px;font-size:8.50px;color:#000"><span>Alt+Ctrl+G</span></div></div><div class="mi" style="left:6px;top:205px;width:162.20px;height:14.07px"><div class="t" style="left:14px;top:2px;font-size:8.50px;color:#000"><span class="c">智能对象</span></div><svg class="arr" style="left:153.30px;top:3.40px" width="3" height="5" viewBox="0 0 3 5"><path d="M0 0L2.9 2.5L0 5Z" fill="#111"/></svg></div><div class="mi" style="left:6px;top:219px;width:162.20px;height:14.42px"><div class="t" style="left:14px;top:2px;font-size:8.50px;color:#000"><span class="c">视频图层</span></div><svg class="arr" style="left:153.30px;top:3.75px" width="3" height="5" viewBox="0 0 3 5"><path d="M0 0L2.9 2.5L0 5Z" fill="#111"/></svg></div><div class="mi hl" style="left:6px;top:233px;width:162.20px;height:14.77px"><div class="t" style="left:14px;top:2px;font-size:8.50px;color:#fff"><span class="c">栅格化</span><span>(Z)</span></div><svg class="arr" style="left:153.30px;top:4.10px" width="3" height="5" viewBox="0 0 3 5"><path d="M0 0L2.9 2.5L0 5Z" fill="#fff"/></svg></div><div class="mi" style="left:6px;top:254px;width:162.20px;height:14.57px"><div class="t" style="left:14px;top:1px;font-size:8.50px;color:#000"><span class="c">新建基于图层的切片</span><span>(B)</span></div></div><div class="mi" style="left:6px;top:275px;width:162.20px;height:14.37px"><div class="t" style="left:14px;top:1px;font-size:8.50px;color:#000"><span class="c">图层编组</span><span>(G)</span></div><div class="t sc" style="right:11.60px;top:1px;font-size:8.50px;color:#000"><span>Ctrl+G</span></div></div><div class="mi dis" style="left:6px;top:289px;width:162.20px;height:14.72px"><div class="t" style="left:14px;top:1px;font-size:8.50px;color:#8e8e8e"><span class="c">取消图层编组</span><span>(U)</span></div><div class="t sc" style="right:11.60px;top:1px;font-size:8.50px;color:#8e8e8e"><span>Shift+Ctrl+G</span></div></div><div class="mi" style="left:6px;top:304px;width:162.20px;height:14.07px"><div class="t" style="left:14px;top:0px;font-size:8.50px;color:#000"><span class="c">隐藏图层</span><span>(R)</span></div></div><div class="mi" style="left:6px;top:325px;width:162.20px;height:13.88px"><div class="t" style="left:14px;top:1px;font-size:8.50px;color:#000"><span class="c">排列</span><span>(A)</span></div><svg class="arr" style="left:153.30px;top:3.20px" width="3" height="5" viewBox="0 0 3 5"><path d="M0 0L2.9 2.5L0 5Z" fill="#111"/></svg></div><div class="mi dis" style="left:6px;top:339px;width:162.20px;height:14.23px"><div class="t" style="left:14px;top:1px;font-size:8.50px;color:#8e8e8e"><span class="c">合并形状</span><span>(H)</span></div><svg class="arr" style="left:153.30px;top:3.55px" width="3" height="5" viewBox="0 0 3 5"><path d="M0 0L2.9 2.5L0 5Z" fill="#8a8a8a"/></svg></div><div class="mi dis" style="left:6px;top:360px;width:162.20px;height:14.03px"><div class="t" style="left:14px;top:1px;font-size:8.50px;color:#8e8e8e"><span class="c">对齐</span><span>(I)</span></div><svg class="arr" style="left:153.30px;top:3.35px" width="3" height="5" viewBox="0 0 3 5"><path d="M0 0L2.9 2.5L0 5Z" fill="#8a8a8a"/></svg></div><div class="mi dis" style="left:6px;top:374px;width:162.20px;height:14.38px"><div class="t" style="left:14px;top:1px;font-size:8.50px;color:#8e8e8e"><span class="c">分布</span><span>(T)</span></div><svg class="arr" style="left:153.30px;top:3.70px" width="3" height="5" viewBox="0 0 3 5"><path d="M0 0L2.9 2.5L0 5Z" fill="#8a8a8a"/></svg></div><div class="mi dis" style="left:6px;top:395px;width:162.20px;height:14.18px"><div class="t" style="left:14px;top:1px;font-size:8.50px;color:#8e8e8e"><span class="c">锁定组内的所有图层</span><span>(X)<i class="el">...</i></span></div></div><div class="mi dis" style="left:6px;top:416px;width:162.20px;height:13.98px"><div class="t" style="left:14px;top:1px;font-size:8.50px;color:#8e8e8e"><span class="c">链接图层</span><span>(K)</span></div></div><div class="mi dis" style="left:6px;top:430px;width:162.20px;height:14.33px"><div class="t" style="left:14px;top:1px;font-size:8.50px;color:#8e8e8e"><span class="c">选择链接图层</span><span>(S)</span></div></div><div class="mi" style="left:6px;top:451px;width:162.20px;height:14.13px"><div class="t" style="left:14px;top:0px;font-size:8.50px;color:#000"><span class="c">向下合并</span><span>(E)</span></div><div class="t sc" style="right:11.60px;top:0px;font-size:8.50px;color:#000"><span>Ctrl+E</span></div></div><div class="mi" style="left:6px;top:465px;width:162.20px;height:14.48px"><div class="t" style="left:14px;top:1px;font-size:8.50px;color:#000"><span class="c">合并可见图层</span></div><div class="t sc" style="right:11.60px;top:1px;font-size:8.50px;color:#000"><span>Shift+Ctrl+E</span></div></div><div class="mi" style="left:6px;top:479px;width:162.20px;height:14.83px"><div class="t" style="left:14px;top:1px;font-size:8.50px;color:#000"><span class="c">拼合图像</span><span>(F)</span></div></div><div class="mi dis" style="left:6px;top:500px;width:162.20px;height:14.63px"><div class="t" style="left:14px;top:1px;font-size:8.50px;color:#8e8e8e"><span class="c">修边</span></div><svg class="arr" style="left:153.30px;top:3.95px" width="3" height="5" viewBox="0 0 3 5"><path d="M0 0L2.9 2.5L0 5Z" fill="#8a8a8a"/></svg></div></div></div>
<div class="menu sub" style="left:173px;top:261px;width:102px;height:167px"><svg class="panel" width="102" height="167" viewBox="0 0 102 167"><rect x="6.95" y="6.90" width="88.00" height="153.20" fill="#000" opacity=".10" filter="url(#shb)"/><rect x="4.40" y="3.95" width="88.70" height="153.90" fill="#9a9a9a"/><rect x="4.75" y="4.30" width="88.00" height="153.20" fill="#f0f0f0"/><rect x="5.55" y="5.10" width="86.40" height="151.60" fill="none" stroke="#fafafa" stroke-width="1"/><rect x="5.90" y="5.70" width="85.50" height="13.60" fill="#3399ff"/><rect x="7.20" y="123.15" width="83.20" height=".9" fill="#c8c8c8"/><rect x="7.20" y="124.05" width="83.20" height=".7" fill="#fbfbfb"/></svg><div class="items"><div class="mi hl" style="left:6px;top:5px;width:85.40px;height:14.47px"><div class="t" style="left:13px;top:1px;font-size:8.50px;color:#fff"><span class="c">文字</span><span>(T)</span></div></div><div class="mi dis" style="left:6px;top:19px;width:85.40px;height:14.90px"><div class="t" style="left:13px;top:2px;font-size:8.50px;color:#8e8e8e"><span class="c">形状</span><span>(S)</span></div></div><div class="mi dis" style="left:6px;top:34px;width:85.40px;height:14.33px"><div class="t" style="left:13px;top:1px;font-size:8.50px;color:#8e8e8e"><span class="c">填充内容</span><span>(F)</span></div></div><div class="mi dis" style="left:6px;top:48px;width:85.40px;height:14.76px"><div class="t" style="left:13px;top:1px;font-size:8.50px;color:#8e8e8e"><span class="c">矢量蒙版</span><span>(V)</span></div></div><div class="mi dis" style="left:6px;top:63px;width:85.40px;height:14.19px"><div class="t" style="left:13px;top:1px;font-size:8.50px;color:#8e8e8e"><span class="c">智能对象</span><span>(O)</span></div></div><div class="mi dis" style="left:6px;top:77px;width:85.40px;height:14.62px"><div class="t" style="left:13px;top:2px;font-size:8.50px;color:#8e8e8e"><span class="c">视频</span><span>(D)</span></div></div><div class="mi dis" style="left:6px;top:92px;width:85.40px;height:14.05px"><div class="t" style="left:13px;top:1px;font-size:8.50px;color:#8e8e8e"><span>3D(3)</span></div></div><div class="mi dis" style="left:6px;top:106px;width:85.40px;height:14.48px"><div class="t" style="left:13px;top:1px;font-size:8.50px;color:#8e8e8e"><span class="c">图层样式</span></div></div><div class="mi" style="left:6px;top:127px;width:85.40px;height:14.71px"><div class="t" style="left:13px;top:2px;font-size:8.50px;color:#000"><span class="c">图层</span><span>(L)</span></div></div><div class="mi" style="left:6px;top:142px;width:85.40px;height:14.14px"><div class="t" style="left:13px;top:1px;font-size:8.50px;color:#000"><span class="c">所有图层</span><span>(A)</span></div></div></div></div>
</body>
</html>
